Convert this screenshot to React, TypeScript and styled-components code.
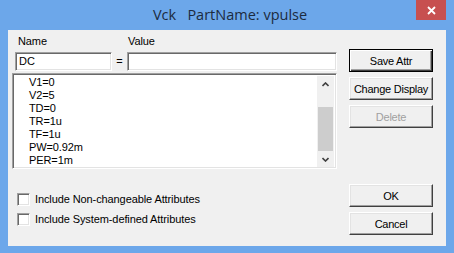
import styled, { createGlobalStyle } from 'styled-components'

const GlobalStyle = createGlobalStyle`
    html, body {
        margin: 0;
        padding: 0;
        background: #fff;
    }
    body {
        font-family: "Liberation Sans", Arial, sans-serif;
        font-size: 11px;
        color: #000;
    }
`

const attrs = ['V1=0', 'V2=5', 'TD=0', 'TR=1u', 'TF=1u', 'PW=0.92m', 'PER=1m']

const ChevronUp = () => (
    <svg width="7" height="5" viewBox="0 0 7 5">
        <path d="M0.5 4 L3.5 1 L6.5 4" fill="none" stroke="#404040" strokeWidth="1.6" />
    </svg>
)

const ChevronDown = () => (
    <svg width="7" height="5" viewBox="0 0 7 5">
        <path d="M0.5 1 L3.5 4 L6.5 1" fill="none" stroke="#404040" strokeWidth="1.6" />
    </svg>
)

const App = () => {
    return (
        <>
            <GlobalStyle />
            <Window>
                <TitleBar>
                    <span />
                    <Title>Vck   PartName: vpulse</Title>
                    <CloseButton>
                        <svg width="9" height="9" viewBox="0 0 9 9">
                            <path d="M1 1 L8 8 M8 1 L1 8" stroke="#fff" strokeWidth="1.8" />
                        </svg>
                    </CloseButton>
                </TitleBar>

                <Client>
                    <LeftColumn>
                        <LabelRow>
                            <FieldLabel $width={110}>Name</FieldLabel>
                            <FieldLabel>Value</FieldLabel>
                        </LabelRow>

                        <InputRow>
                            <TextInput $width={97} defaultValue="DC" />
                            <Equals>=</Equals>
                            <TextInput $width={210} defaultValue="" />
                        </InputRow>

                        <ListBox>
                            <ListItems>
                                {attrs.map((a) => (
                                    <ListItem key={a}>{a}</ListItem>
                                ))}
                            </ListItems>
                            <ScrollBar>
                                <ArrowCell><ChevronUp /></ArrowCell>
                                <Track $offset={15}>
                                    <Thumb $height={44} />
                                </Track>
                                <ArrowCell><ChevronDown /></ArrowCell>
                            </ScrollBar>
                        </ListBox>

                        <Checks>
                            <CheckRow>
                                <CheckBox />
                                <span>Include Non-changeable Attributes</span>
                            </CheckRow>
                            <CheckRow>
                                <CheckBox />
                                <span>Include System-defined Attributes</span>
                            </CheckRow>
                        </Checks>
                    </LeftColumn>

                    <RightColumn>
                        <ButtonGroup>
                            <Button $default>Save Attr</Button>
                            <Button>Change Display</Button>
                            <Button disabled>Delete</Button>
                        </ButtonGroup>
                        <ButtonGroup $bottom>
                            <Button>OK</Button>
                            <Button>Cancel</Button>
                        </ButtonGroup>
                    </RightColumn>
                </Client>
            </Window>
        </>
    )
}

export default App

const Window = styled.div`
    width: 454px;
    height: 253px;
    box-sizing: border-box;
    background: #6ca7ea;
    padding: 0 8px 7px 8px;
    display: flex;
    flex-direction: column;
`

const TitleBar = styled.div`
    height: 30px;
    flex: 0 0 auto;
    display: grid;
    grid-template-columns: 1fr auto 1fr;
    align-items: start;
`

const Title = styled.div`
    font-family: "Open Sans", "Noto Sans", sans-serif;
    font-size: 14.5px;
    line-height: 30px;
    color: #1c2b3e;
    white-space: pre;
    padding-left: 6px;
`

const CloseButton = styled.div`
    justify-self: end;
    width: 30px;
    height: 20px;
    background: #c75050;
    display: flex;
    align-items: center;
    justify-content: center;
`

const Client = styled.div`
    flex: 1;
    background: #f0f0f0;
    display: flex;
    padding: 5px 0 0 4px;
    letter-spacing: -0.1px;
`

const LeftColumn = styled.div`
    width: 325px;
    display: flex;
    flex-direction: column;
`

const LabelRow = styled.div`
    display: flex;
    padding-left: 6px;
    height: 16px;
    line-height: 13px;
`

const FieldLabel = styled.span<{ $width?: number }>`
    width: ${(p) => (p.$width ? `${p.$width}px` : 'auto')};
`

const InputRow = styled.div`
    display: flex;
    align-items: center;
    padding-left: 3px;
    height: 20px;
    margin-bottom: 2px;
`

const TextInput = styled.input<{ $width: number }>`
    width: ${(p) => p.$width}px;
    height: 19px;
    box-sizing: border-box;
    border: 1px solid;
    border-color: #a0a0a0 #fff #fff #a0a0a0;
    box-shadow: inset 1px 1px 0 #696969, inset -1px -1px 0 #e3e3e3;
    background: #fff;
    padding: 0 3px;
    margin: 0;
    font-family: "Liberation Sans", Arial, sans-serif;
    font-size: 11px;
    color: #000;
    outline: none;
`

const Equals = styled.span`
    width: 15px;
    text-align: center;
    line-height: 13px;
`

const ListBox = styled.div`
    height: 96px;
    box-sizing: border-box;
    border: 1px solid;
    border-color: #a0a0a0 #fff #fff #a0a0a0;
    box-shadow: inset 1px 1px 0 #696969, inset -1px -1px 0 #e3e3e3;
    background: #fff;
    display: flex;
    padding: 2px 2px 1px 2px;
`

const ListItems = styled.div`
    flex: 1;
    overflow: hidden;
    padding: 0 0 0 14px;
`

const ListItem = styled.div`
    line-height: 13px;
    height: 13px;
`

const ScrollBar = styled.div`
    width: 17px;
    display: flex;
    flex-direction: column;
    background: #f0f0f0;
`

const ArrowCell = styled.div`
    height: 17px;
    display: flex;
    align-items: center;
    justify-content: center;
`

const Track = styled.div<{ $offset: number }>`
    flex: 1;
    padding-top: ${(p) => p.$offset}px;
    display: flex;
    flex-direction: column;
    align-items: center;
`

const Thumb = styled.div<{ $height: number }>`
    width: 15px;
    height: ${(p) => p.$height}px;
    background: #cdcdcd;
`

const Checks = styled.div`
    display: flex;
    flex-direction: column;
    gap: 7px;
    margin-top: 24px;
    padding-left: 5px;
`

const CheckRow = styled.label`
    display: flex;
    align-items: center;
    gap: 5px;
    line-height: 13px;
`

const CheckBox = styled.span`
    width: 13px;
    height: 13px;
    box-sizing: border-box;
    border: 1px solid;
    border-color: #a0a0a0 #fff #fff #a0a0a0;
    box-shadow: inset 1px 1px 0 #696969, inset -1px -1px 0 #e3e3e3;
    background: #fff;
`

const RightColumn = styled.div`
    display: flex;
    flex-direction: column;
    margin-left: 12px;
    padding-bottom: 11px;
`

const ButtonGroup = styled.div<{ $bottom?: boolean }>`
    display: flex;
    flex-direction: column;
    gap: 5px;
    margin-top: ${(p) => (p.$bottom ? 'auto' : '14px')};
`

const Button = styled.button<{ $default?: boolean }>`
    width: 84px;
    height: 23px;
    box-sizing: border-box;
    margin: 0;
    padding: 0;
    background: #f0f0f0;
    font-family: "Liberation Sans", Arial, sans-serif;
    font-size: 11px;
    letter-spacing: -0.25px;
    white-space: nowrap;
    color: #000;
    border: 1px solid;
    border-color: ${(p) => (p.$default ? '#000' : '#fff #404040 #404040 #fff')};
    box-shadow: ${(p) =>
        p.$default
            ? 'inset 1px 1px 0 #fff, inset -1px -1px 0 #404040, inset -2px -2px 0 #a0a0a0'
            : 'inset -1px -1px 0 #a0a0a0, inset 1px 1px 0 #e3e3e3'};

    &:disabled {
        color: #a0a0a0;
    }
`
